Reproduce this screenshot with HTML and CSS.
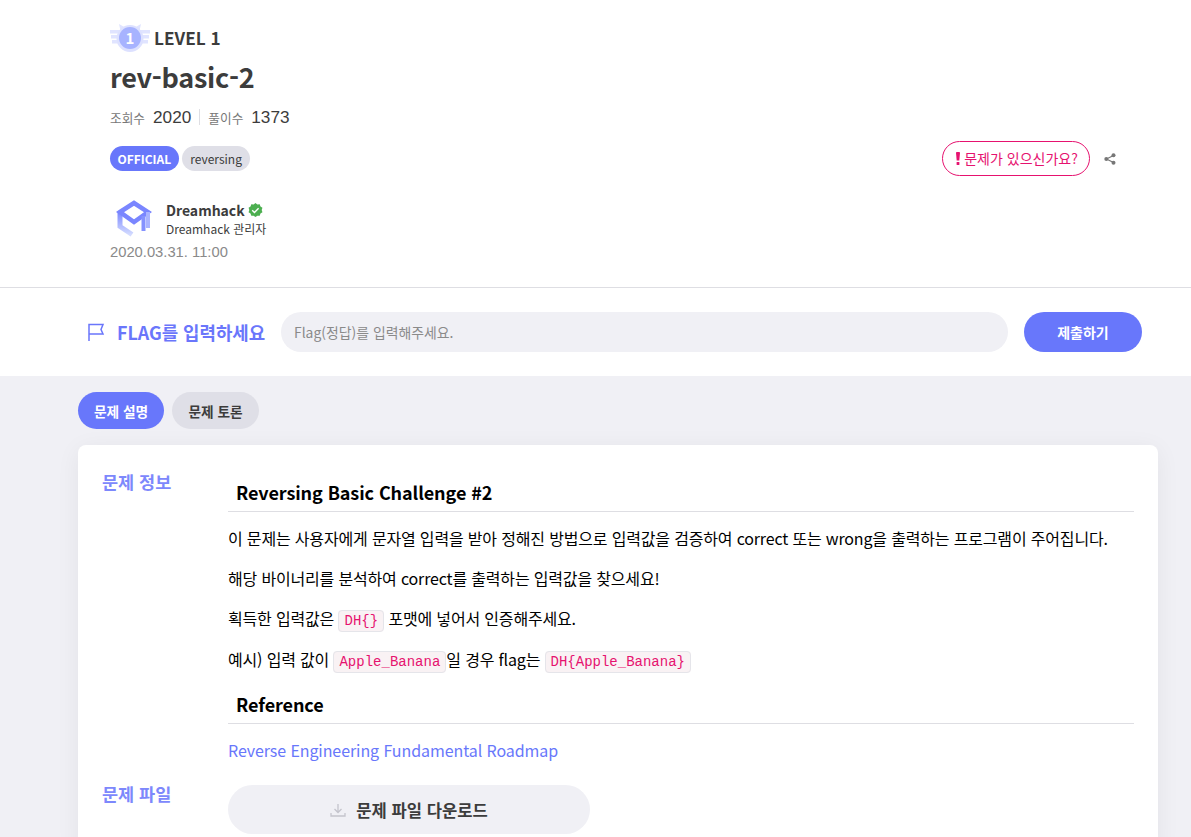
FILE: index.html
```html
<!DOCTYPE html>
<html lang="ko">
<head>
  <meta charset="UTF-8" />
  <meta name="viewport" content="width=device-width, initial-scale=1.0" />
  <title>rev-basic-2</title>
  <link rel="stylesheet" href="styles.css">
</head>
<body>
  <header class="challenge-head">
    <div class="level">
      <svg class="level-badge" viewBox="0 0 40 28" width="40" height="28">
        <g fill="#e0e4ff">
          <rect x="0" y="6" width="10" height="3.500" />
          <rect x="1" y="11" width="9" height="3.500" />
          <rect x="2" y="16" width="9" height="3.500" />
          <rect x="30" y="6" width="10" height="3.500" />
          <rect x="30" y="11" width="9" height="3.500" />
          <rect x="29" y="16" width="9" height="3.500" />
          <path d="M9 0l7 4-5 5zM31 0l-7 4 5 5z" />
        </g>
        <circle cx="20" cy="14.500" r="13.500" fill="#dde1ff" />
        <circle cx="20" cy="14" r="11" fill="#a7b3ff" />
        <text x="20" y="19.500" class="level-num">1</text>
      </svg>
      <span>LEVEL 1</span>
    </div>
    <h1>rev-basic-2</h1>
    <div class="counts">
      <span class="count-label">조회수</span><span class="count-num">2020</span>
      <span class="count-sep"></span>
      <span class="count-label">풀이수</span><span class="count-num">1373</span>
    </div>
    <div class="tag-row">
      <div class="tags">
        <span class="tag tag-official">OFFICIAL</span>
        <span class="tag">reversing</span>
      </div>
      <div class="actions">
        <button class="report-btn">
          <svg viewBox="0 0 4 13" width="4" height="13">
            <path d="M0 .8Q0 0 .8 0h2.400Q4 0 4 .8L3.300 8.500H.7z" fill="#e6126f" />
            <rect x=".6" y="10" width="2.800" height="3" rx=".6" fill="#e6126f" />
          </svg>
          문제가 있으신가요?
        </button>
        <svg class="share" viewBox="0 0 12 12" width="12" height="12">
          <path d="M9.500 2.500L2.500 6l7 3.500" fill="none" stroke="#777" stroke-width="1.200" />
          <circle cx="9.500" cy="2.300" r="2" fill="#777" />
          <circle cx="2.300" cy="6" r="2" fill="#777" />
          <circle cx="9.500" cy="9.700" r="2" fill="#777" />
        </svg>
      </div>
    </div>
    <div class="author">
      <svg class="author-logo" viewBox="4 2 36 38" width="36" height="38">
        <defs>
          <linearGradient id="logoGrad" x1="0" y1="0" x2="0" y2="1">
            <stop offset="0" stop-color="#7f8bff" />
            <stop offset="1" stop-color="#d3dbff" />
          </linearGradient>
        </defs>
        <path d="M8 15v13.500l12 8" fill="none" stroke="url(#logoGrad)" stroke-width="5" />
        <path d="M8 14L22 5l14 9-14 10z" fill="none" stroke="#7a86ff" stroke-width="4.500" />
        <path d="M36 14v16" fill="none" stroke="#aab4ff" stroke-width="4" />
        <path d="M31.500 18v15" fill="none" stroke="#8592ff" stroke-width="4" />
      </svg>
      <div class="author-text">
        <div class="author-name">Dreamhack
          <svg viewBox="0 0 16 16" width="15" height="15">
            <path d="M8 0l2 1.500 2.500-.2.8 2.400 2.100 1.400-.8 2.400.8 2.400-2.100 1.400-.8 2.400-2.500-.2L8 15l-2-1.500-2.500.2-.8-2.400L.6 9.900l.8-2.400-.8-2.400 2.100-1.400.8-2.400 2.500.2z" fill="#4caf50" />
            <path d="M4.500 7.800l2.400 2.400 4.400-4.600" fill="none" stroke="#fff" stroke-width="1.500" />
          </svg>
        </div>
        <div class="author-role">Dreamhack 관리자</div>
      </div>
    </div>
    <div class="date">2020.03.31. 11:00</div>
  </header>

  <section class="flag-bar">
    <svg class="flag-icon" viewBox="0 0 18 18" width="18" height="18">
      <path d="M2 18V1.500h14l-2 5 2 4.500H2" fill="none" stroke="#6a76fb" stroke-width="1.500" />
    </svg>
    <span class="flag-title">FLAG를 입력하세요</span>
    <input class="flag-input" type="text" placeholder="Flag(정답)를 입력해주세요." />
    <button class="flag-submit">제출하기</button>
  </section>

  <main class="content">
    <div class="tabs">
      <button class="tab tab-active">문제 설명</button>
      <button class="tab">문제 토론</button>
    </div>
    <div class="card">
      <div class="card-row">
        <h3 class="side-label">문제 정보</h3>
        <div class="desc">
          <h2>Reversing Basic Challenge #2</h2>
          <p class="p-first">이 문제는 사용자에게 문자열 입력을 받아 정해진 방법으로 입력값을 검증하여 correct 또는 wrong을 출력하는 프로그램이 주어집니다.</p>
          <p>해당 바이너리를 분석하여 correct를 출력하는 입력값을 찾으세요!</p>
          <p>획득한 입력값은 <code>DH{}</code> 포맷에 넣어서 인증해주세요.</p>
          <p class="p-example">예시) 입력 값이 <code>Apple_Banana</code>일 경우 flag는 <code>DH{Apple_Banana}</code></p>
          <h2 class="h-reference">Reference</h2>
          <p class="p-first"><a href="#">Reverse Engineering Fundamental Roadmap</a></p>
        </div>
      </div>
      <div class="card-row file-row">
        <h3 class="side-label">문제 파일</h3>
        <button class="download">
          <svg viewBox="0 0 16 16" width="16" height="16">
            <path d="M8 2v8M4.500 7L8 10.500 11.500 7M1 11v3h14v-3" fill="none" stroke="#c4c4cc" stroke-width="1.300" />
          </svg>
          문제 파일 다운로드
        </button>
      </div>
    </div>
  </main>
</body>
</html>
```

FILE: styles.css
```css
html, body {
  height: 837px;
  overflow: hidden;
}

body {
  margin: 0;
  font-family: "Noto Sans CJK KR", "Noto Sans", sans-serif;
  color: #3c3c3c;
  background: #f0f0f5;
}

button, input {
  font-family: inherit;
}

.challenge-head {
  background: #fff;
  height: 287px;
  padding: 0 75px 0 110px;
  border-bottom: 1px solid #dedee3;
}

.level {
  display: flex;
  align-items: center;
  gap: 4px;
  padding-top: 24px;
  font-size: 17.200px;
  font-weight: 700;
  line-height: 28px;
}

.level-num {
  font-size: 15px;
  font-weight: 700;
  fill: #fff;
  text-anchor: middle;
}

h1 {
  margin: 6px 0 0;
  font-size: 27px;
  line-height: 38px;
  font-weight: 700;
  letter-spacing: -0.27px;
}

.counts {
  display: flex;
  align-items: center;
  margin-top: 11px;
  height: 20px;
}

.count-label {
  font-size: 12.700px;
  color: #777;
}

.count-num {
  margin-left: 8px;
  font-family: "Liberation Sans", sans-serif;
  font-size: 17.200px;
}

.count-sep {
  width: 1px;
  height: 16px;
  margin: 0 8px;
  background: #dedee3;
}

.tag-row {
  display: flex;
  justify-content: space-between;
  align-items: center;
  margin-top: 13px;
  height: 36px;
}

.tags {
  display: flex;
  gap: 3px;
}

.tag {
  padding: 0 8.500px;
  height: 25px;
  line-height: 25px;
  border-radius: 13px;
  font-size: 12px;
  background: #dfdfe7;
}

.tag-official {
  padding: 0 7.500px;
  background: #6877fb;
  color: #fff;
  font-weight: 700;
}

.actions {
  display: flex;
  align-items: center;
  gap: 14px;
}

.share {
  margin-top: 2px;
}

.report-btn {
  display: flex;
  align-items: center;
  justify-content: center;
  gap: 4px;
  width: 148px;
  height: 35px;
  padding: 0 0 0 2px;
  border: 1px solid #e6126f;
  border-radius: 18px;
  background: #fff;
  color: #e6126f;
  font-size: 14px;
}

.author {
  display: flex;
  align-items: center;
  gap: 14px;
  margin: 24px 0 0 6px;
}

.author-name {
  display: flex;
  align-items: center;
  gap: 3px;
  margin-top: 1px;
  font-size: 14px;
  font-weight: 700;
  line-height: 19px;
}

.author-role {
  font-size: 12px;
  line-height: 18px;
}

.date {
  margin-top: 4px;
  font-family: "Liberation Sans", sans-serif;
  font-size: 14.750px;
  line-height: 20px;
  color: #8a8a8a;
}

.flag-bar {
  display: flex;
  align-items: center;
  background: #fff;
  height: 88px;
  padding: 0 49px 0 87px;
}

.flag-icon {
  margin-right: 12px;
}

.flag-title {
  width: 149px;
  margin-right: 15px;
  font-size: 17.850px;
  font-weight: 700;
  color: #6a76fb;
  white-space: nowrap;
}

.flag-input {
  flex: 1;
  height: 40px;
  padding: 0 13px;
  box-sizing: border-box;
  border: 0;
  border-radius: 20px;
  background: #f0f0f5;
  font-size: 13.900px;
}

.flag-input::placeholder {
  color: #8a8a8a;
}

.flag-submit {
  width: 118px;
  height: 40px;
  margin-left: 16px;
  border: 0;
  border-radius: 20px;
  background: #6877fb;
  color: #fff;
  font-size: 14px;
  font-weight: 700;
}

.content {
  padding: 16px 33px 0 78px;
}

.tabs {
  display: flex;
  gap: 8px;
}

.tab {
  width: 87px;
  height: 37px;
  padding: 0;
  border: 0;
  border-radius: 19px;
  background: #dfdfe7;
  color: #3c3c3c;
  font-size: 13.700px;
  font-weight: 700;
}

.tab-active {
  width: 86px;
  background: #6877fb;
  color: #fff;
}

.card {
  margin-top: 16px;
  padding: 19px 24px;
  background: #fff;
  border-radius: 8px;
  box-shadow: 0 4px 24px rgba(0, 0, 0, 0.06);
}

.card-row {
  display: flex;
}

.side-label {
  flex: 0 0 126px;
  margin: 0;
  font-size: 17.500px;
  line-height: 36px;
  font-weight: 700;
  color: #7d88fc;
}

.desc {
  flex: 1;
  color: #000;
  font-size: 16px;
  line-height: 26px;
  letter-spacing: -0.17px;
}

.desc h2 {
  margin: 13px 0 0;
  padding: 0 8px 4px;
  border-bottom: 1px solid #dedee3;
  font-size: 18px;
  line-height: 30px;
  font-weight: 700;
  letter-spacing: -0.09px;
}

.desc .h-reference {
  margin-top: 17px;
}

.desc p {
  margin: 14px 0 0;
}

.desc .p-first {
  margin-top: 13px;
}

.desc .p-example {
  margin-top: 15px;
}

code {
  padding: 2px 5px;
  border: 1px solid #e5e5ea;
  border-radius: 4px;
  background: #f9f2f4;
  color: #e6126f;
  font-family: "Liberation Mono", monospace;
  font-size: 14px;
  line-height: 1;
  letter-spacing: 0;
}

.desc a {
  color: #6877fb;
  letter-spacing: -0.08px;
  text-decoration: none;
}

.file-row {
  margin-top: 13px;
}

.download {
  display: flex;
  align-items: center;
  justify-content: center;
  gap: 10px;
  width: 362px;
  height: 49px;
  margin-top: 9px;
  border: 0;
  border-radius: 25px;
  background: #f0f0f5;
  color: #3c3c3c;
  font-size: 16.600px;
  font-weight: 700;
}
```
